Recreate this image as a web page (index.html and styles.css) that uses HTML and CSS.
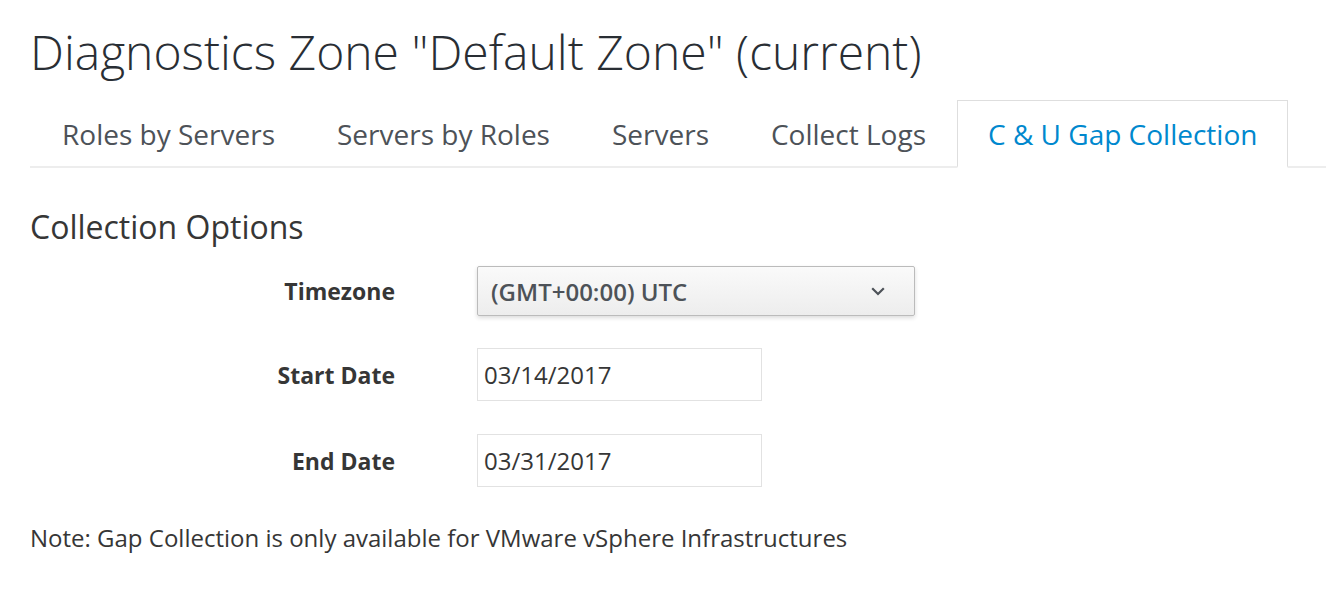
FILE: index.html
```html
<!DOCTYPE html>
<html>
<head>
<meta charset="utf-8">
<link rel="stylesheet" href="styles.css">
</head>
<body>
<div class="page">
  <h1 class="title">Diagnostics Zone "Default Zone" (current)</h1>
  <ul class="tabs">
    <li class="tab">Roles by Servers</li>
    <li class="tab">Servers by Roles</li>
    <li class="tab">Servers</li>
    <li class="tab">Collect Logs</li>
    <li class="tab active">C &amp; U Gap Collection</li>
  </ul>
  <h2 class="section">Collection Options</h2>
  <div class="form">
    <div class="row">
      <div class="label">Timezone</div>
      <div class="select">
        <span class="select-text">(GMT+00:00) UTC</span>
        <svg class="chev" width="14" height="9" viewBox="0 0 14 9"><path d="M1.2 1.2 L7 7 L12.8 1.2" fill="none" stroke="#4d5258" stroke-width="2.2"/></svg>
      </div>
    </div>
    <div class="row row-2">
      <div class="label">Start Date</div>
      <div class="input">03/14/2017</div>
    </div>
    <div class="row row-3">
      <div class="label">End Date</div>
      <div class="input">03/31/2017</div>
    </div>
  </div>
  <p class="note">Note: Gap Collection is only available for VMware vSphere Infrastructures</p>
</div>
</body>
</html>
```

FILE: styles.css
```css
html, body {
  margin: 0;
  padding: 0;
  background: #fff;
}
body {
  font-family: "Open Sans", "Noto Sans", sans-serif;
  color: #363636;
}
.page {
  padding: 0 0 0 30px;
}
.title {
  margin: 0;
  padding-top: 20px;
  font-weight: 300;
  font-size: 48px;
  line-height: 64px;
  color: #292e34;
}
.tabs {
  list-style: none;
  margin: 16px 0 0 0;
  padding: 0 0 0 1px;
  display: flex;
  border-bottom: 2px solid #ededed;
}
.tab {
  font-size: 28px;
  line-height: 40px;
  white-space: nowrap;
  padding: 13px 30px 12px 30px;
  border: 1px solid transparent;
  border-bottom: 2px solid transparent;
  color: #4d5258;
  margin-bottom: -2px;
}
.tab.active {
  color: #0088ce;
  border-color: #dedede;
  border-bottom-color: #fff;
  background: #fff;
}
.section {
  margin: 37px 0 0 0;
  font-weight: 400;
  font-size: 32px;
  line-height: 44px;
  color: #363636;
}
.form {
  margin-top: 17px;
  display: flex;
  flex-direction: column;
}
.row {
  display: flex;
  align-items: center;
}
.row-2 {
  margin-top: 32px;
}
.row-3 {
  margin-top: 33px;
}
.label {
  width: 365px;
  text-align: right;
  font-weight: 700;
  font-size: 23px;
  color: #363636;
  margin-right: 82px;
}
.select {
  width: 436px;
  height: 48px;
  border: 1px solid #bbb;
  border-radius: 2px;
  background: linear-gradient(#fafafa, #ededed);
  box-shadow: 0 2px 4px rgba(3, 3, 3, 0.14);
  display: flex;
  align-items: center;
  justify-content: space-between;
}
.select-text {
  padding-left: 13px;
  font-weight: 600;
  font-size: 24px;
  color: #4d5258;
}
.chev {
  margin-right: 29px;
}
.input {
  width: 277px;
  height: 51px;
  border: 1px solid #e2e2e2;
  padding-left: 6px;
  display: flex;
  align-items: center;
  font-size: 24px;
  color: #363636;
}
.note {
  margin: 36px 0 0 0;
  font-size: 24px;
  line-height: 30px;
  color: #363636;
}
```
